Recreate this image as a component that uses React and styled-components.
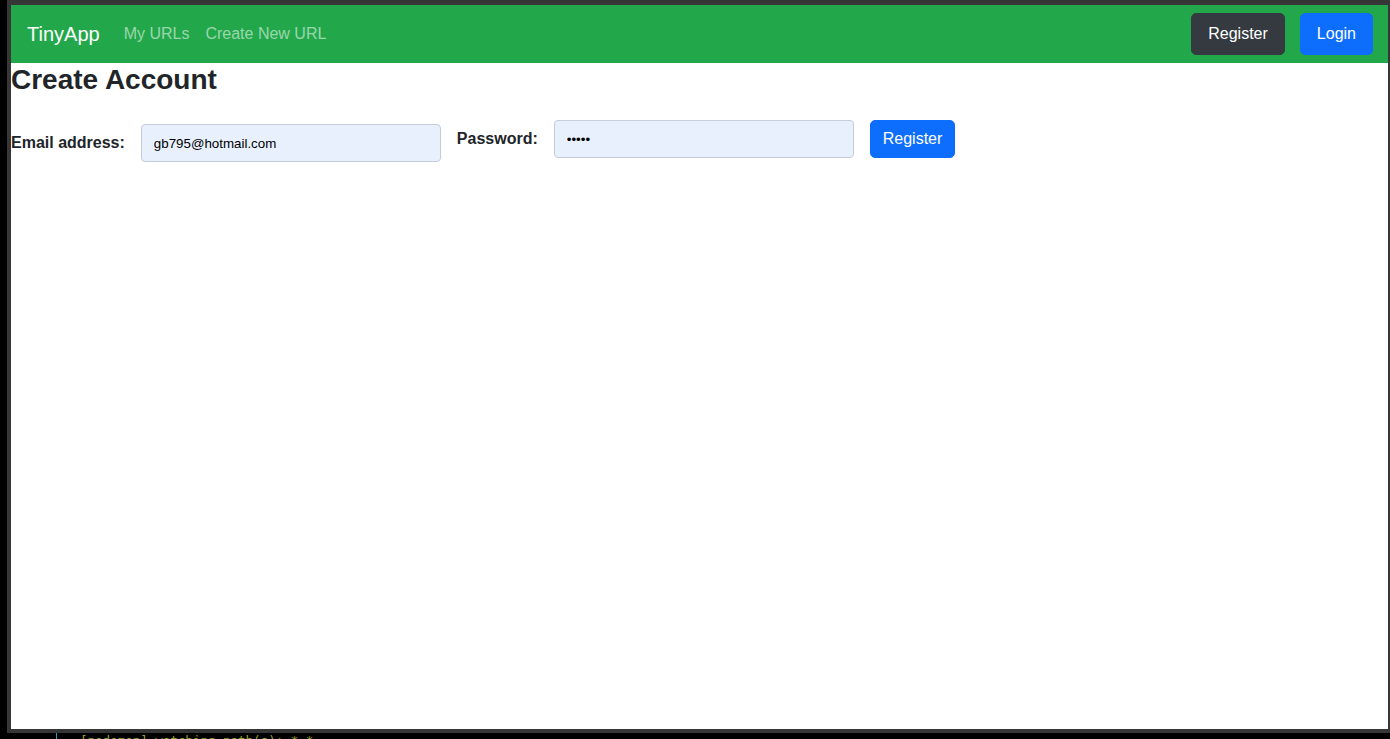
import React from 'react';
import styled, { createGlobalStyle } from 'styled-components';

const GlobalStyle = createGlobalStyle`
    html, body {
        margin: 0;
        padding: 0;
        background: #000;
        overflow: hidden;
    }
    body {
        font-family: "Liberation Sans", Arial, sans-serif;
        color: #212529;
    }
`;

const Screen = styled.div`
    height: 739px;
    overflow: hidden;
    display: flex;
    flex-direction: column;
`;

const Window = styled.div`
    flex-shrink: 0;
    margin-left: 7px;
    height: 724px;
    border-style: solid;
    border-color: #363636;
    border-width: 5px 2px 4px 4px;
    background: #fff;
    display: flex;
    flex-direction: column;
`;

const Navbar = styled.nav`
    height: 58px;
    flex-shrink: 0;
    display: flex;
    align-items: center;
    padding: 0 15px 0 16px;
    background: #22a84b;
`;

const Brand = styled.a`
    font-size: 20px;
    line-height: 30px;
    color: #fff;
    margin-right: 16px;
    text-decoration: none;
`;

const NavLink = styled.a`
    font-size: 16px;
    line-height: 24px;
    padding: 0 8px;
    color: rgba(255, 255, 255, 0.55);
    text-decoration: none;
`;

const NavActions = styled.div`
    margin-left: auto;
    display: flex;
    gap: 15px;
`;

const NavButton = styled.button`
    font-family: inherit;
    font-size: 16px;
    line-height: 24px;
    padding: 8px 16px;
    border: 1px solid ${(props) => (props.$dark ? '#343a40' : '#0d6efd')};
    border-radius: 5px;
    background: ${(props) => (props.$dark ? '#343a40' : '#0d6efd')};
    color: #fff;
    cursor: pointer;
`;

const Main = styled.main`
    display: flex;
    flex-direction: column;
`;

const Heading = styled.h3`
    margin: 0;
    font-size: 28px;
    line-height: 34px;
    font-weight: 700;
    color: #212529;
`;

const Form = styled.form`
    margin-top: 23px;
    display: flex;
    align-items: flex-start;
    gap: 16px;
`;

const FieldGroup = styled.div`
    display: flex;
    align-items: center;
    gap: 16px;
    margin-top: ${(props) => props.$shift || 0}px;
`;

const Label = styled.label`
    font-size: 16px;
    line-height: 24px;
    font-weight: 700;
    color: #212529;
`;

const Input = styled.input`
    box-sizing: border-box;
    width: 300px;
    height: 38px;
    padding: 0 12px;
    border: 1px solid #c4ccd8;
    border-radius: 4px;
    background: #e8f0fe;
    font-family: "Liberation Sans", Arial, sans-serif;
    font-size: 13.33px;
    color: #000;
    outline: none;
`;

const SubmitButton = styled.button`
    box-sizing: border-box;
    height: 38px;
    font-family: inherit;
    font-size: 16px;
    line-height: 24px;
    padding: 0 12px;
    border: 1px solid #0d6efd;
    border-radius: 5px;
    background: #0d6efd;
    color: #fff;
    cursor: pointer;
`;

const Terminal = styled.div`
    flex-shrink: 0;
    display: flex;
    padding-left: 56px;
    height: 20px;
`;

const Gutter = styled.div`
    width: 1px;
    background: #2a9fb5;
    margin-right: 23px;
`;

const TerminalLine = styled.span`
    font-family: "DejaVu Sans Mono", "Liberation Mono", monospace;
    font-size: 12.5px;
    line-height: 16px;
    color: #9aa224;
    white-space: pre;
`;

const App = () => {
    return (
        <>
            <GlobalStyle />
            <Screen>
                <Window>
                    <Navbar>
                        <Brand href="#">TinyApp</Brand>
                        <NavLink href="#">My URLs</NavLink>
                        <NavLink href="#">Create New URL</NavLink>
                        <NavActions>
                            <NavButton $dark>Register</NavButton>
                            <NavButton>Login</NavButton>
                        </NavActions>
                    </Navbar>
                    <Main>
                        <Heading>Create Account</Heading>
                        <Form onSubmit={(event) => event.preventDefault()}>
                            <FieldGroup $shift={4}>
                                <Label htmlFor="email">Email address:</Label>
                                <Input id="email" type="email" defaultValue="gb795@hotmail.com" />
                            </FieldGroup>
                            <FieldGroup>
                                <Label htmlFor="password">Password:</Label>
                                <Input id="password" type="password" defaultValue="12345" />
                                <SubmitButton type="submit">Register</SubmitButton>
                            </FieldGroup>
                        </Form>
                    </Main>
                </Window>
                <Terminal>
                    <Gutter />
                    <TerminalLine>[nodemon] watching path(s): *.*</TerminalLine>
                </Terminal>
            </Screen>
        </>
    );
};

export default App;
